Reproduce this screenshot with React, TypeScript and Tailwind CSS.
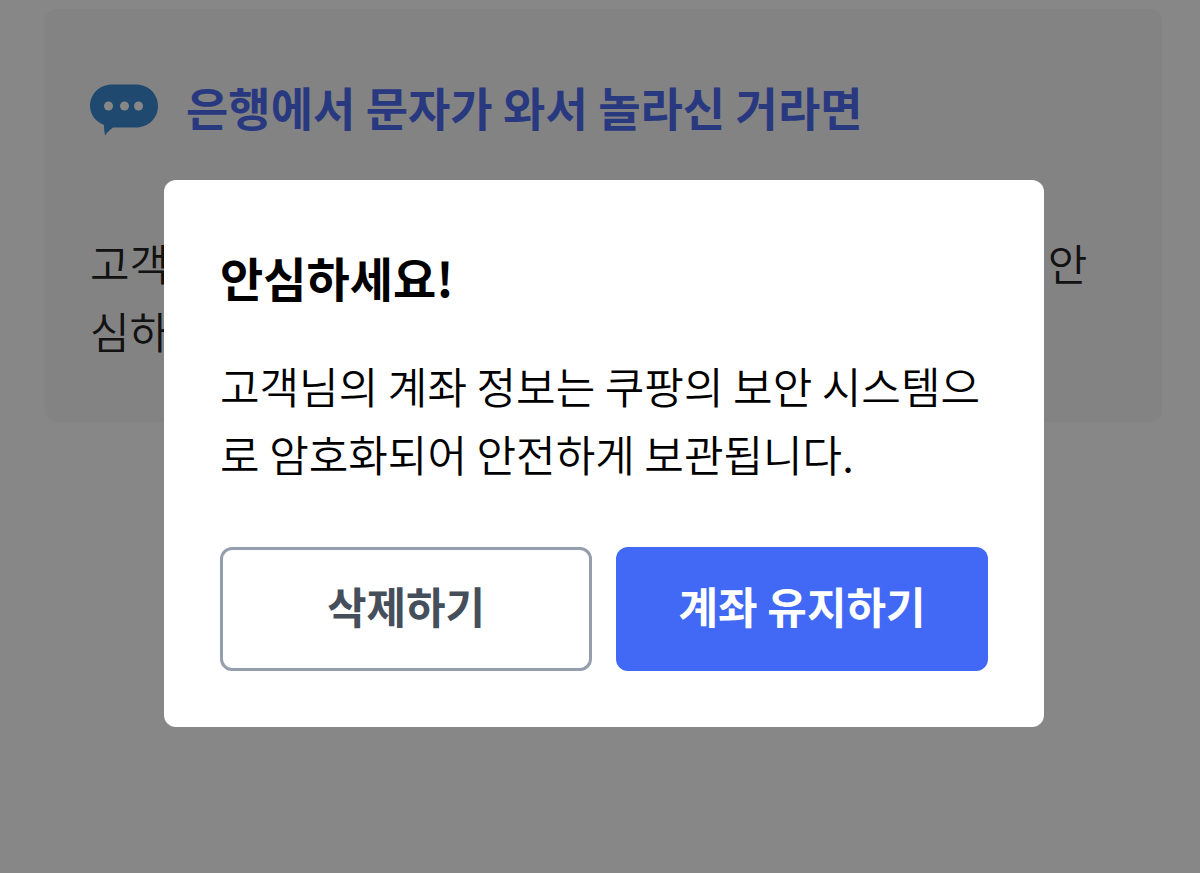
function ChatBubbleIcon() {
  return (
    <svg
      viewBox="0 0 68 52"
      className="w-[68px] h-[52px] shrink-0"
      aria-hidden="true"
    >
      <path
        d="M22 0.5H46C58.5 0.5 68 10 68 22S58.5 43.5 46 43.5H23C20 45.5 17 48.500 15 51.500C14.200 48 14 44.500 14 41C5.500 37.500 0 30.500 0 22C0 10 9.500 0.5 22 0.5Z"
        fill="#3c8bd2"
      />
      <circle cx="18.500" cy="22" r="4.500" fill="#fff" />
      <circle cx="34.500" cy="22" r="4.500" fill="#fff" />
      <circle cx="48.500" cy="22" r="4.500" fill="#fff" />
    </svg>
  );
}

function NoticeCard() {
  return (
    <section className="mt-[9px] ml-[45px] mr-[38px] rounded-xl bg-[#f8f8f8] px-[45px] pt-[63px] pb-[58px]">
      <div className="flex items-start gap-7">
        <div className="pt-3">
          <ChatBubbleIcon />
        </div>
        <h1 className="text-[46px] leading-[68px] font-bold text-[#4f6df2]">
          은행에서 문자가 와서 놀라신 거라면
        </h1>
      </div>
      <p className="mt-[88px] text-[43px] leading-[68px] font-[350] break-all text-[#222]">
        고객님의 계좌가 정상적으로 등록되었다는 안내문이니 안심하세요.
      </p>
    </section>
  );
}

function ConfirmDialog() {
  return (
    <div className="fixed inset-0 bg-black/47 pt-[180px] pl-[164px] pr-[156px]">
      <div
        role="dialog"
        aria-modal="true"
        aria-labelledby="dialog-title"
        className="rounded-xl bg-white px-14 pt-[63px] pb-14"
      >
        <h2
          id="dialog-title"
          className="text-[47px] leading-[68px] font-bold text-black"
        >
          안심하세요!
        </h2>
        <p className="mt-10 text-[43px] leading-[68px] font-[350] break-all text-black">
          고객님의 계좌 정보는 쿠팡의 보안 시스템으로 암호화되어 안전하게
          보관됩니다.
        </p>
        <div className="mt-15 grid grid-cols-2 gap-6">
          <button
            type="button"
            className="h-[124px] rounded-xl border-3 border-[#959eac] bg-white pb-2 text-[43px] font-bold text-[#454f5b]"
          >
            삭제하기
          </button>
          <button
            type="button"
            className="h-[124px] rounded-xl bg-[#4169f6] pb-2 text-[43px] font-bold text-white"
          >
            계좌 유지하기
          </button>
        </div>
      </div>
    </div>
  );
}

export default function App() {
  return (
    <main className="flow-root min-h-screen bg-white font-['Noto_Sans_CJK_KR',sans-serif]">
      <NoticeCard />
      <ConfirmDialog />
    </main>
  );
}
